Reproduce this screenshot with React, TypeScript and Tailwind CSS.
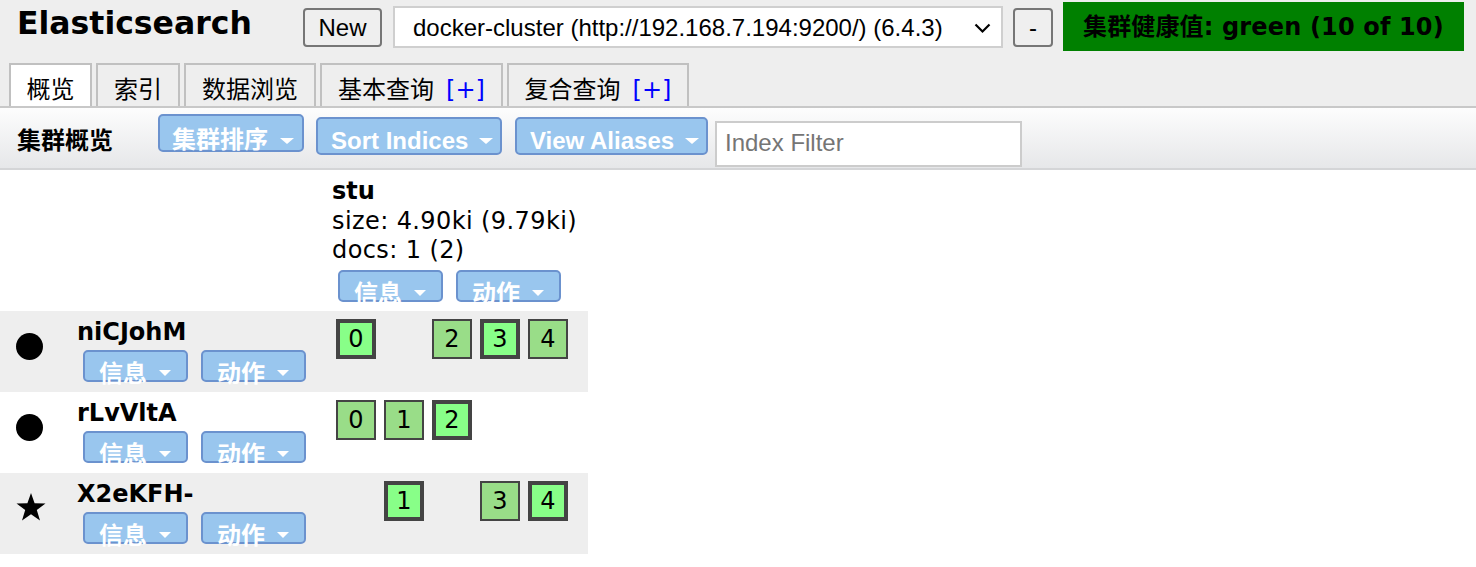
import React from 'react';

const F_V = "font-['DejaVu_Sans','Noto_Sans_CJK_SC',sans-serif]";
const F_A = "font-['Liberation_Sans','Noto_Sans_CJK_SC',sans-serif]";
const F_C = "font-['Noto_Sans_CJK_SC',sans-serif]";

type Shard = 'P' | 'R' | null;

const tabs = [
  { label: '概览', w: 'w-[83px]', active: true },
  { label: '索引', w: 'w-[84px]' },
  { label: '数据浏览', w: 'w-[132px]' },
  { label: '基本查询', w: 'w-[183px]', plus: true },
  { label: '复合查询', w: 'w-[182px]', plus: true },
];

const nodes: { name: string; icon: 'dot' | 'star'; bg: string; shards: Shard[] }[] = [
  { name: 'niCJohM', icon: 'dot', bg: 'bg-[#eeeeee]', shards: ['P', null, 'R', 'P', 'R'] },
  { name: 'rLvVltA', icon: 'dot', bg: 'bg-white', shards: ['R', 'R', 'P', null, null] },
  { name: 'X2eKFH-', icon: 'star', bg: 'bg-[#eeeeee]', shards: [null, 'P', null, 'R', 'P'] },
];

function Caret({ className }: { className: string }) {
  return (
    <span
      className={`block w-0 h-0 border-l-transparent border-r-transparent border-t-white ${className}`}
    />
  );
}

// small blue dropdown used in index header and node rows
function SmallDrop({ label, className = '' }: { label: string; className?: string }) {
  return (
    <div
      className={`flex items-start w-[105px] h-[32px] border-2 border-[#6b92ce] bg-[#99c6ee] rounded-[5px] pl-[14px] pt-[8px] ${className}`}
    >
      <span className={`${F_C} font-bold text-white text-[24px] leading-[24px] whitespace-nowrap`}>{label}</span>
      <Caret className="ml-[12px] mt-[10px] border-l-[6.5px] border-r-[6.5px] border-t-[6px]" />
    </div>
  );
}

function StarIcon() {
  return (
    <svg width="30" height="28" viewBox="0 0 30 28">
      <polygon
        points="15,0 18.6,10.2 29.5,10.4 20.8,17 24,27.6 15,21.3 6,27.6 9.2,17 0.5,10.4 11.4,10.2"
        fill="#000"
      />
    </svg>
  );
}

export default function App() {
  return (
    <div className="w-[1476px] min-h-[567px] bg-white text-black">
      {/* header */}
      <div className="bg-[#eeeeee]">
        <div className="flex items-start h-[63px]">
          <div className="w-[303px] pl-[17px] pt-[5px]">
            <h1 className={`${F_V} text-[31.5px] leading-[36px] font-bold`}>Elasticsearch</h1>
          </div>
          <button
            className={`${F_A} mt-[8px] h-[39px] w-[79px] border-2 border-[#767676] rounded-[4px] bg-[#efefef] text-[24px] text-black`}
          >
            New
          </button>
          <div className="ml-[11px] mt-[6px] h-[42px] w-[610px] border-2 border-[#cfcfcf] bg-white flex items-center pl-[18px] pr-[10px] pt-[2px]">
            <span className={`${F_A} text-[24px] whitespace-nowrap`}>
              docker-cluster (http://192.168.7.194:9200/) (6.4.3)
            </span>
            <svg className="ml-auto" width="17" height="11" viewBox="0 0 17 11">
              <polyline points="1.5,1.5 8.5,8.5 15.5,1.5" fill="none" stroke="#000" strokeWidth="2.2" />
            </svg>
          </div>
          <button
            className={`${F_A} ml-[10px] mt-[8px] h-[39px] w-[40px] border-2 border-[#767676] rounded-[4px] bg-[#efefef] text-[24px] text-black`}
          >
            -
          </button>
          <div
            className={`${F_V} ml-[10px] mt-[2px] w-[401px] h-[49px] bg-[#008000] flex items-center pl-[20px] font-bold text-[24px] tracking-[0.15px] whitespace-nowrap`}
          >
            集群健康值: green (10 of 10)
          </div>
        </div>
        <div className="flex items-end h-[43px] pl-[9px] gap-[4px]">
          {tabs.map((t) => (
            <div
              key={t.label}
              className={`h-[43px] ${t.w} border-2 border-b-0 border-[#c0c0c0] pt-[13px] text-center ${F_V} text-[24px] leading-[24px] whitespace-nowrap ${
                t.active ? 'bg-white' : 'bg-[#eeeeee]'
              }`}
            >
              {t.label}
              {t.plus && <span className="ml-[12px] text-[#0000ff]">[+]</span>}
            </div>
          ))}
        </div>
        <div className="h-[2px] bg-[#c8c8c8]" />
      </div>

      {/* toolbar */}
      <div className="h-[62px] border-b-2 border-[#d4d5d7] bg-linear-to-b from-[#fdfdfd] to-[#e6e7e9] flex items-start pl-[17px]">
        <div className={`${F_C} mt-[19px] font-bold text-[24px] leading-[24px] whitespace-nowrap`}>集群概览</div>
        <div className="ml-[45px] mt-[6px] flex items-start w-[146px] h-[38px] border-2 border-[#6b92ce] bg-[#99c6ee] rounded-[5px] pl-[12px] pt-[10px]">
          <span className={`${F_C} font-bold text-white text-[24px] leading-[24px] whitespace-nowrap`}>集群排序</span>
          <Caret className="ml-[12px] mt-[12px] border-l-[7px] border-r-[7px] border-t-[6px]" />
        </div>
        <div className="ml-[12px] mt-[9px] flex items-start w-[186px] h-[38px] border-2 border-[#6b92ce] bg-[#99c6ee] rounded-[5px] pl-[13px] pr-[7px] pt-[10px]">
          <span className={`${F_A} font-bold text-white text-[24px] leading-[24px] whitespace-nowrap`}>Sort Indices</span>
          <Caret className="ml-auto mt-[9px] border-l-[7px] border-r-[7px] border-t-[6px]" />
        </div>
        <div className="ml-[13px] mt-[9px] flex items-start w-[193px] h-[38px] border-2 border-[#6b92ce] bg-[#99c6ee] rounded-[5px] pl-[13px] pr-[7px] pt-[10px]">
          <span className={`${F_A} font-bold text-white text-[24px] leading-[24px] whitespace-nowrap`}>View Aliases</span>
          <Caret className="ml-auto mt-[9px] border-l-[7px] border-r-[7px] border-t-[6px]" />
        </div>
        <input
          placeholder="Index Filter"
          className={`${F_A} ml-[7px] mt-[13px] w-[307px] h-[46px] border-2 border-[#cccccc] bg-white px-[8px] pb-[3px] text-[24px] outline-none placeholder:text-[#757575]`}
        />
      </div>

      {/* cluster overview table */}
      <div className="w-[588px]">
        <div className="flex h-[141px]">
          <div className="w-[332px]" />
          <div className={`${F_V} text-[24px] leading-[29.5px] tracking-[0.4px] pt-[7px]`}>
            <div className="font-bold tracking-normal">stu</div>
            <div className="whitespace-nowrap">size: 4.90ki (9.79ki)</div>
            <div>docs: 1 (2)</div>
            <div className="flex pl-[6px] mt-[4.5px] tracking-normal">
              <SmallDrop label="信息" />
              <SmallDrop label="动作" className="ml-[13px]" />
            </div>
          </div>
        </div>

        {nodes.map((n) => (
          <div key={n.name} className={`flex h-[81px] ${n.bg}`}>
            <div className={`w-[77px] pl-[16px] ${n.icon === 'star' ? 'pt-[20px]' : 'pt-[22px]'}`}>
              {n.icon === 'star' ? <StarIcon /> : <div className="w-[27px] h-[27px] rounded-full bg-black" />}
            </div>
            <div className="w-[255px]">
              <div className={`${F_V} mt-[7px] font-bold text-[24px] leading-[28px]`}>{n.name}</div>
              <div className="flex pl-[6px] mt-[4px]">
                <SmallDrop label="信息" />
                <SmallDrop label="动作" className="ml-[13px]" />
              </div>
            </div>
            <div className="flex items-start pl-[4px] pt-[8px]">
              {n.shards.map((s, i) =>
                s ? (
                  <div
                    key={i}
                    className={`w-[40px] h-[40px] mr-[8px] flex items-center justify-center border-[#444444] ${F_V} text-[24px] leading-none ${
                      s === 'P' ? 'border-4 bg-[#88ff88]' : 'border-2 bg-[#99dd88]'
                    }`}
                  >
                    {i}
                  </div>
                ) : (
                  <div key={i} className="w-[40px] h-[40px] mr-[8px]" />
                )
              )}
            </div>
          </div>
        ))}
      </div>
    </div>
  );
}
